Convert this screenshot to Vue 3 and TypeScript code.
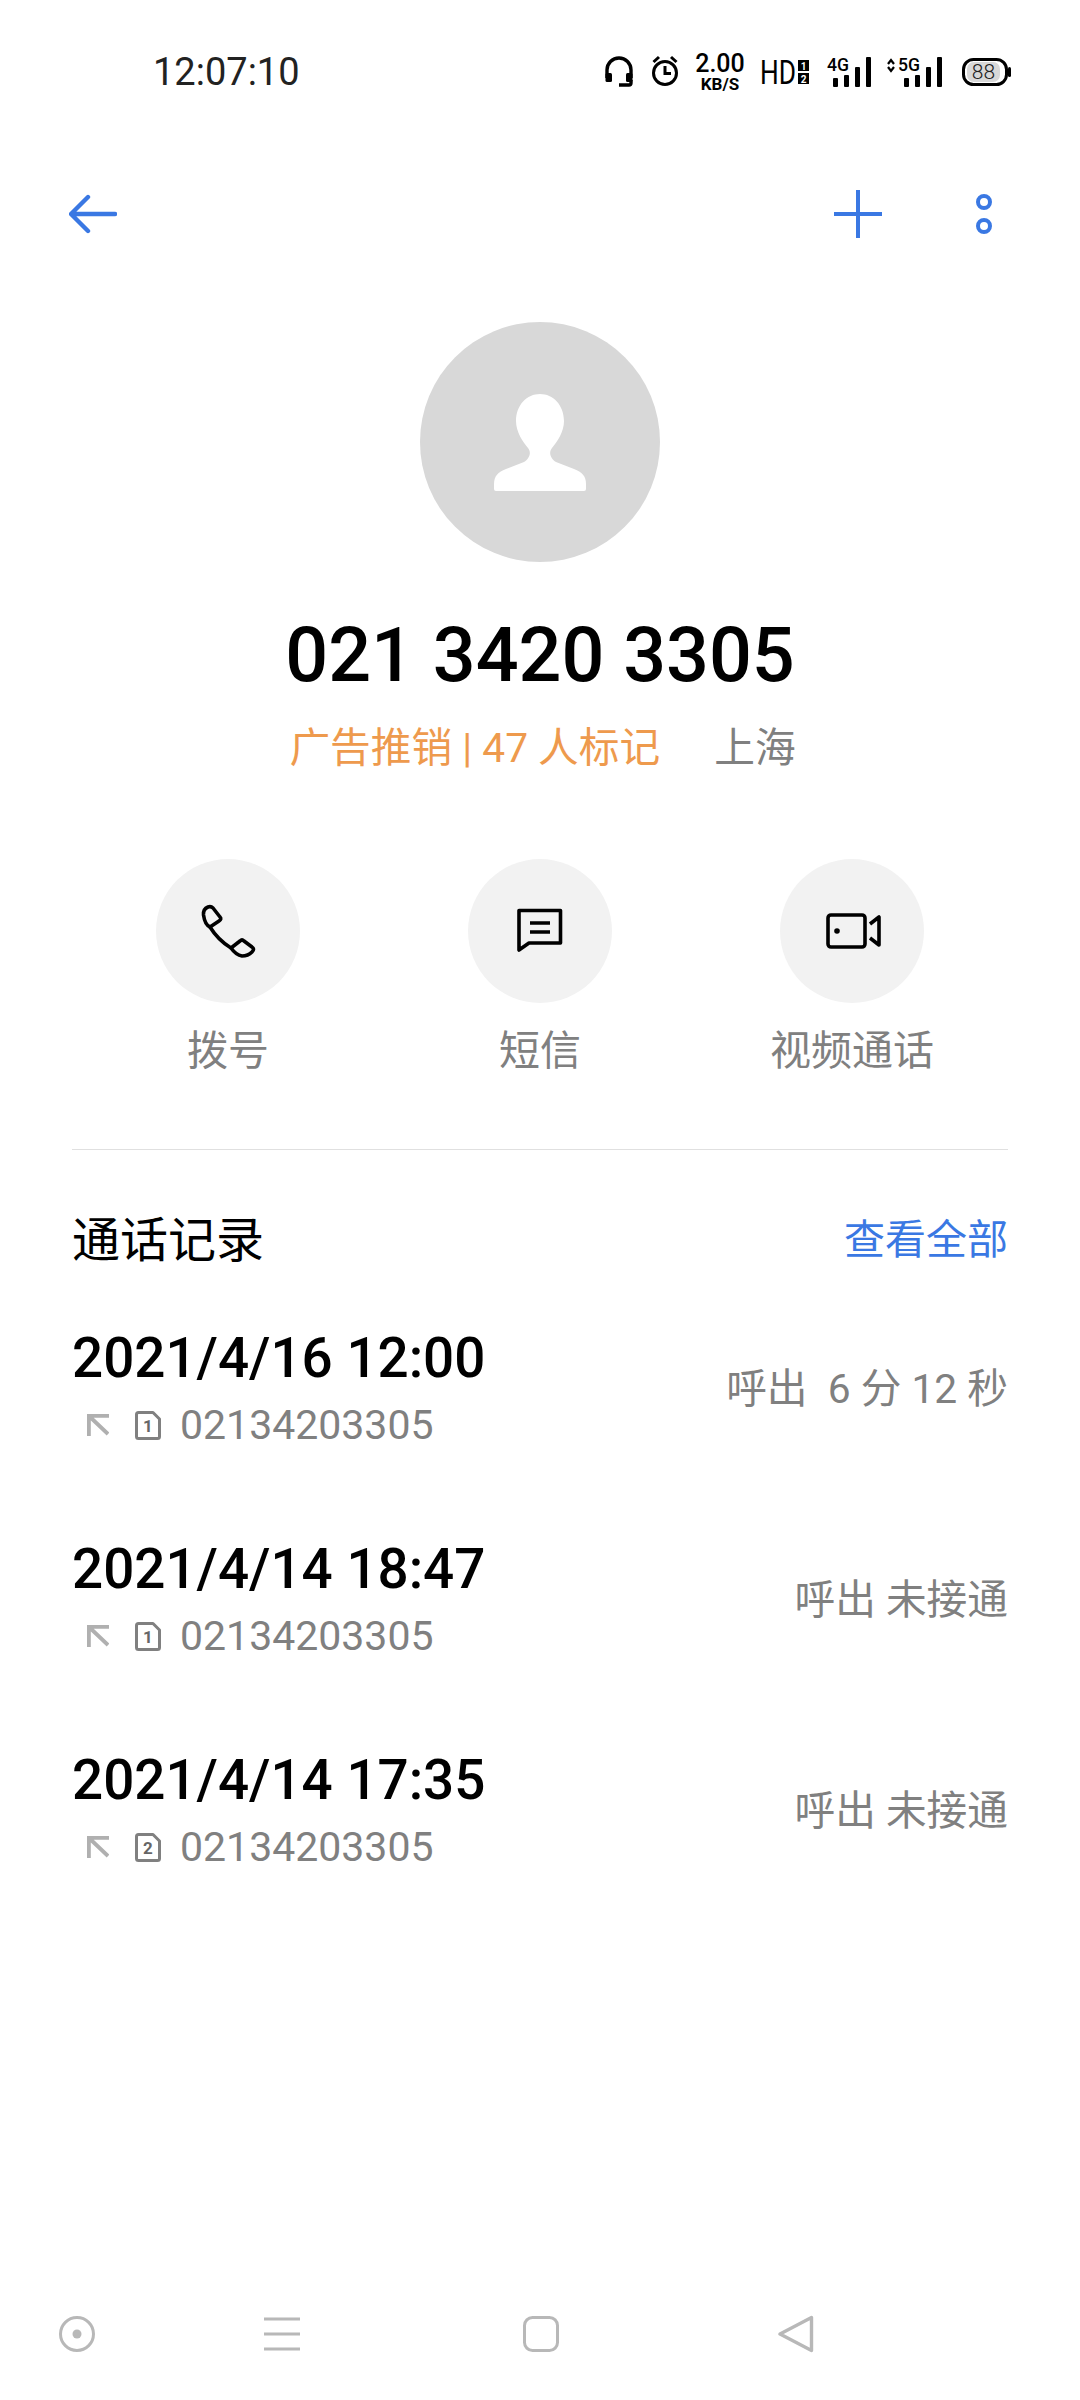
<script setup lang="ts">
interface CallRow {
  time: string
  sim: string
  result: string
}

const actions: { key: string; label: string }[] = [
  { key: 'dial', label: '拨号' },
  { key: 'sms', label: '短信' },
  { key: 'video', label: '视频通话' },
]

const calls: CallRow[] = [
  { time: '2021/4/16 12:00', sim: '1', result: '呼出  6 分 12 秒' },
  { time: '2021/4/14 18:47', sim: '1', result: '呼出 未接通' },
  { time: '2021/4/14 17:35', sim: '2', result: '呼出 未接通' },
]
</script>

<template>
  <div class="page">
    <div class="status">
      <span class="clock">12:07:10</span>
      <div class="status-icons">
        <svg width="30" height="40" viewBox="0 0 30 40">
          <path d="M2 26V18a12 12 0 0 1 24 0v8" fill="none" stroke="#000" stroke-width="3.4" />
          <rect x="0.5" y="21" width="6.5" height="9" rx="1.5" />
          <rect x="21" y="21" width="6.5" height="9" rx="1.5" />
          <path d="M26 28v3q0 2-2 2H14" fill="none" stroke="#000" stroke-width="3.4" />
        </svg>
        <svg width="29" height="40" viewBox="0 0 29 40">
          <circle cx="14" cy="21" r="11.5" fill="none" stroke="#000" stroke-width="3" />
          <path d="M14 14v7.500h6M2.500 10l5.500-5M25.500 10l-5.500-5" fill="none" stroke="#000" stroke-width="3" />
        </svg>
        <svg width="48" height="40" viewBox="0 0 48 40" class="status-svg">
          <text x="24" y="20" text-anchor="middle" font-size="25" font-weight="500">2.00</text>
          <text x="24" y="38" text-anchor="middle" font-size="17" font-weight="700">KB/S</text>
        </svg>
        <svg width="51" height="40" viewBox="0 0 51 40" class="status-svg">
          <text x="0" y="32" font-size="33" font-weight="400" textLength="36" lengthAdjust="spacingAndGlyphs">HD</text>
          <rect x="38" y="8" width="11" height="11" />
          <rect x="38" y="21" width="11" height="11" />
          <text x="43.500" y="17.500" text-anchor="middle" font-size="10" font-weight="700" fill="#fff">1</text>
          <text x="43.500" y="30.500" text-anchor="middle" font-size="10" font-weight="700" fill="#fff">2</text>
        </svg>
        <svg width="44" height="40" viewBox="0 0 44 40" class="status-svg">
          <text x="0" y="19" font-size="19" font-weight="500" textLength="22" lengthAdjust="spacingAndGlyphs">4G</text>
          <rect x="6" y="26" width="5" height="9" rx="1" />
          <rect x="17" y="23" width="5" height="12" rx="1" />
          <rect x="28" y="15" width="5" height="20" rx="1" />
          <rect x="39" y="5" width="5" height="30" rx="1" />
        </svg>
        <svg width="55" height="40" viewBox="0 0 55 40" class="status-svg">
          <path d="M1 12l3-4 3 4M1 15l3 4 3-4" fill="none" stroke="#000" stroke-width="2.200" />
          <text x="11" y="19" font-size="19" font-weight="500" textLength="22" lengthAdjust="spacingAndGlyphs">5G</text>
          <rect x="17" y="26" width="5" height="9" rx="1" />
          <rect x="28" y="23" width="5" height="12" rx="1" />
          <rect x="39" y="15" width="5" height="20" rx="1" />
          <rect x="50" y="5" width="5" height="30" rx="1" />
        </svg>
        <svg width="53" height="40" viewBox="0 0 53 40" class="status-svg">
          <rect x="5.500" y="7.500" width="43" height="25" rx="10" fill="none" stroke="#000" stroke-width="3" />
          <rect x="9" y="10" width="33" height="20" rx="7" fill="#d8d8d8" />
          <rect x="50" y="15" width="3" height="10" rx="1.500" />
          <text x="25.500" y="27" text-anchor="middle" font-size="21" font-weight="300" fill="#222">88</text>
        </svg>
      </div>
    </div>

    <div class="topbar">
      <svg width="48" height="40" viewBox="0 0 48 40">
        <path d="M46 20H3M19 3 2 20l17 17" fill="none" stroke="#3a78e3" stroke-width="4.400" stroke-linecap="round" stroke-linejoin="round" />
      </svg>
      <div class="topbar-right">
        <svg width="48" height="48" viewBox="0 0 48 48">
          <path d="M24 0v48M0 24h48" stroke="#3a78e3" stroke-width="4" />
        </svg>
        <svg width="16" height="40" viewBox="0 0 16 40">
          <circle cx="8" cy="8" r="6" fill="none" stroke="#3a78e3" stroke-width="4" />
          <circle cx="8" cy="32" r="6" fill="none" stroke="#3a78e3" stroke-width="4" />
        </svg>
      </div>
    </div>

    <div class="avatar">
      <svg width="92" height="97" viewBox="0 0 92 97">
        <path d="M46 0C59 0 70 11 70 27C70 38 63 48 58 54C54 59 57 65 62 68L80 75C88 78 92 82 92 90V95Q92 97 90 97H2Q0 97 0 95V90C0 82 4 78 12 75L30 68C35 65 38 59 34 54C29 48 22 38 22 27C22 11 33 0 46 0Z" fill="#fff" />
      </svg>
    </div>

    <div class="number">021 3420 3305</div>
    <div class="tagline">
      <span class="tag">广告推销 | 47 人标记</span>
      <span class="place">上海</span>
    </div>

    <div class="actions">
      <div v-for="action in actions" :key="action.key" class="action">
        <div class="action-circle">
          <svg v-if="action.key === 'dial'" width="80" height="70" viewBox="-2 1 80 70" fill="none" stroke="#000" stroke-width="3.600" stroke-linejoin="round">
            <path d="M18 12Q21 11 23 13L30 22Q32 24 29 26L20 32Q15 30 13.500 20Q13 14 18 12Z" />
            <path d="M20 32Q28 45 41 53" />
            <path d="M41 53L50 46Q52 44 54 46L62 52Q65 54 62 57Q58 61 52 61Q46 60 41 53Z" />
          </svg>
          <svg v-else-if="action.key === 'sms'" width="70" height="70" viewBox="0 1 70 70" fill="none" stroke="#000" stroke-width="3.600">
            <path d="M14 15.500H55.500V48H24L14 55Z" stroke-linejoin="round" />
            <path d="M25 28H45M25 37H45" />
          </svg>
          <svg v-else width="75" height="60" viewBox="0 1 75 60" fill="none" stroke="#000" stroke-width="3.600">
            <rect x="13" y="15" width="37" height="32" rx="3" />
            <circle cx="22" cy="31" r="2.800" fill="#000" stroke="none" />
            <path d="M55 24L64 17V45L55 38" stroke-linejoin="round" />
          </svg>
        </div>
        <span class="action-label">{{ action.label }}</span>
      </div>
    </div>

    <div class="divider"></div>

    <div class="section-head">
      <span class="section-title">通话记录</span>
      <span class="section-link">查看全部</span>
    </div>

    <div class="calls">
      <div v-for="call in calls" :key="call.time" class="call">
        <div class="call-main">
          <div class="call-time">{{ call.time }}</div>
          <div class="call-sub">
            <svg width="22" height="22" viewBox="0 0 22 22" fill="none" stroke="#b0b0b0" stroke-width="3.800">
              <path d="M1.900 22V1.900H22M2 2l19 18" />
            </svg>
            <svg width="26" height="29" viewBox="0 0 26 29" class="status-svg">
              <path d="M3.500 1.500H18L24.500 8V25.500Q24.500 27.500 22.500 27.500H3.500Q1.500 27.500 1.500 25.500V3.500Q1.500 1.500 3.500 1.500Z" fill="none" stroke="#808080" stroke-width="3" stroke-linejoin="round" />
              <text x="13" y="21" text-anchor="middle" font-size="17" font-weight="700" fill="#666">{{ call.sim }}</text>
            </svg>
            <span class="call-phone">02134203305</span>
          </div>
        </div>
        <div class="call-result">{{ call.result }}</div>
      </div>
    </div>

    <div class="navbar">
      <svg width="36" height="36" viewBox="0 0 36 36">
        <circle cx="18" cy="18" r="16.500" fill="none" stroke="#b8b8b8" stroke-width="3" />
        <circle cx="18" cy="18" r="4.500" fill="#b8b8b8" />
      </svg>
      <svg width="36" height="36" viewBox="0 0 36 36">
        <path d="M0 3H36M0 18H36M0 33H36" stroke="#b8b8b8" stroke-width="3" />
      </svg>
      <svg width="36" height="36" viewBox="0 0 36 36">
        <rect x="1.500" y="1.500" width="33" height="33" rx="8" fill="none" stroke="#b8b8b8" stroke-width="3" />
      </svg>
      <svg width="36" height="38" viewBox="0 0 36 38">
        <path d="M33.500 2.500V35.500L2 19Z" fill="none" stroke="#b8b8b8" stroke-width="3.400" stroke-linejoin="round" />
      </svg>
    </div>
  </div>
</template>

<style>
html,
body {
  margin: 0;
  background: #fff;
}
</style>

<style scoped>
.page {
  width: 1080px;
  height: 2400px;
  display: flex;
  flex-direction: column;
  background: #fff;
  color: #000;
  font-family: Roboto, "Noto Sans CJK SC", sans-serif;
}

.status {
  height: 144px;
  flex: none;
  display: flex;
  align-items: center;
  justify-content: space-between;
  padding: 0 69px 0 153px;
}

.clock {
  font-size: 38px;
  color: #222;
}

.status-icons {
  display: flex;
  align-items: center;
  gap: 16px;
}

.status-svg {
  font-family: Roboto, sans-serif;
  overflow: visible;
}

.topbar {
  height: 140px;
  flex: none;
  display: flex;
  align-items: center;
  justify-content: space-between;
  padding: 0 88px 0 69px;
}

.topbar-right {
  display: flex;
  align-items: center;
  gap: 94px;
}

.avatar {
  width: 240px;
  height: 240px;
  flex: none;
  margin: 38px auto 0;
  border-radius: 50%;
  background: #d8d8d8;
  display: flex;
  align-items: center;
  justify-content: center;
}

.number {
  margin-top: 48px;
  height: 90px;
  line-height: 90px;
  text-align: center;
  font-size: 75.500px;
  font-weight: 500;
}

.tagline {
  margin-top: 20px;
  height: 56px;
  line-height: 56px;
  padding-left: 5px;
  display: flex;
  justify-content: center;
  gap: 54px;
  font-size: 40.700px;
}

.tag {
  color: #ee9a4d;
}

.place {
  color: #808080;
}

.actions {
  margin-top: 83px;
  padding: 0 72px;
  display: grid;
  grid-template-columns: repeat(3, 312px);
}

.action {
  display: flex;
  flex-direction: column;
  align-items: center;
}

.action-circle {
  width: 144px;
  height: 144px;
  border-radius: 50%;
  background: #f2f2f2;
  display: flex;
  align-items: center;
  justify-content: center;
}

.action-label {
  margin-top: 20px;
  height: 56px;
  line-height: 56px;
  font-size: 41px;
  color: #808080;
}

.divider {
  margin: 70px 72px 0;
  height: 1px;
  background: #e0e0e0;
}

.section-head {
  margin-top: 56px;
  padding: 0 72px;
  height: 60px;
  display: flex;
  align-items: center;
  justify-content: space-between;
}

.section-title {
  font-size: 48px;
}

.section-link {
  font-size: 41px;
  color: #3a78e3;
}

.calls {
  margin-top: 57px;
  padding: 0 72px;
  display: flex;
  flex-direction: column;
  gap: 84px;
}

.call {
  display: flex;
  align-items: center;
  justify-content: space-between;
}

.call-time {
  height: 70px;
  line-height: 70px;
  font-size: 54.800px;
  font-weight: 500;
}

.call-sub {
  margin-top: 7px;
  height: 50px;
  padding-left: 15px;
  display: flex;
  align-items: center;
  gap: 26px;
}

.call-phone {
  margin-left: -7px;
  font-size: 41px;
  color: #808080;
}

.call-result {
  margin-bottom: 3px;
  font-size: 40.700px;
  color: #808080;
  white-space: pre;
}

.navbar {
  margin-top: auto;
  height: 132px;
  flex: none;
  padding-left: 59px;
  display: grid;
  grid-template-columns: 205px 259px 255px 36px;
  align-items: center;
}
</style>
